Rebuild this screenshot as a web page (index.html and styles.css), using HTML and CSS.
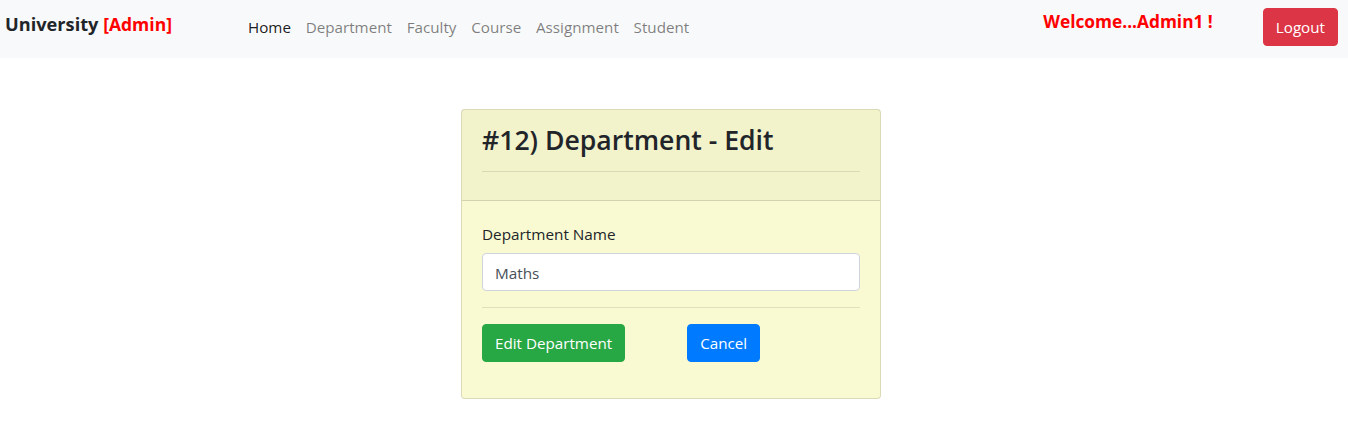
FILE: index.html
```html
<!DOCTYPE html>
<html lang="en">
<head>
<meta charset="utf-8">
<title>Department - Edit</title>
<link rel="stylesheet" href="styles.css">
</head>
<body>
<nav class="navbar">
  <div class="brand">University <span class="brand-role">[Admin]</span></div>
  <ul class="nav-links">
    <li><a class="active" href="#">Home</a></li>
    <li><a href="#">Department</a></li>
    <li><a href="#">Faculty</a></li>
    <li><a href="#">Course</a></li>
    <li><a href="#">Assignment</a></li>
    <li><a href="#">Student</a></li>
  </ul>
  <div class="welcome">Welcome...Admin1 !</div>
  <button class="btn btn-danger logout">Logout</button>
</nav>
<main class="page">
  <section class="card">
    <header class="card-header">
      <h2 class="card-title">#12) Department - Edit</h2>
      <hr class="rule">
    </header>
    <div class="card-body">
      <div class="form-group">
        <label class="label" for="name">Department Name</label>
        <input class="input" id="name" type="text" value="Maths">
      </div>
      <hr class="rule">
      <div class="actions">
        <button class="btn btn-success">Edit Department</button>
        <button class="btn btn-primary">Cancel</button>
      </div>
    </div>
  </section>
</main>
</body>
</html>
```
FILE: styles.css
```css
* { box-sizing: border-box; }
body {
  margin: 0;
  font-family: "Open Sans", "Noto Sans", sans-serif;
  font-size: 15.3px;
  line-height: 24px;
  color: #212529;
  background: #fff;
}
.navbar {
  display: flex;
  align-items: center;
  height: 58px;
  background: #f8f9fa;
  padding: 0 10px 0 5px;
}
.brand {
  font-size: 18.2px;
  font-weight: 700;
  color: #212529;
  width: 243px;
  margin-top: -11px;
}
.brand-role { color: #ff0000; font-size: 17.5px; }
.nav-links {
  display: flex;
  list-style: none;
  margin: 0;
  padding: 0;
  flex: 1;
  margin-top: -5px;
}
.nav-links a {
  display: block;
  padding: 8px 7.4px;
  color: rgba(0,0,0,.5);
  text-decoration: none;
  font-size: 15.2px;
}
.nav-links li:first-child a { padding-left: 0; }
.nav-links a.active { color: rgba(0,0,0,.9); }
.welcome {
  color: #ff0000;
  font-weight: 700;
  font-size: 17.3px;
  margin-right: 50px;
  margin-top: -14px;
}
.btn {
  font-family: inherit;
  font-size: 15.2px;
  line-height: 24px;
  padding: 6px 12px;
  border: 1px solid transparent;
  border-radius: 4px;
  color: #fff;
  cursor: pointer;
}
.btn-danger { background: #dc3545; border-color: #dc3545; }
.btn-success { background: #28a745; border-color: #28a745; }
.btn-primary { background: #007bff; border-color: #007bff; }
.logout { margin-top: -5px; }
.page {
  display: flex;
  justify-content: center;
  padding: 51px 6px 0 0;
}
.card {
  width: 420px;
  background: #fafad2;
  border: 1px solid rgba(0,0,0,.125);
  border-radius: 4px;
}
.card-header {
  background: rgba(0,0,0,.03);
  border-bottom: 1px solid rgba(0,0,0,.125);
  padding: 13px 20px 28px;
}
.card-title {
  margin: 0;
  font-size: 26.6px;
  font-weight: 600;
  line-height: 34px;
}
.rule {
  border: 0;
  border-top: 1px solid rgba(0,0,0,.1);
  margin: 0;
}
.card-header .rule { margin-top: 14px; }
.card-body { padding: 21px 20px 20px; }
.form-group { margin-bottom: 16px; }
.label {
  display: block;
  margin-bottom: 7px;
}
.input {
  display: block;
  width: 100%;
  height: 38px;
  padding: 7px 12px 5px;
  font-family: inherit;
  font-size: 15.3px;
  color: #495057;
  background: #fff;
  border: 1px solid #ced4da;
  border-radius: 4px;
}
.actions {
  display: flex;
  gap: 62px;
  margin-top: 16px;
  margin-bottom: 16px;
}
```
